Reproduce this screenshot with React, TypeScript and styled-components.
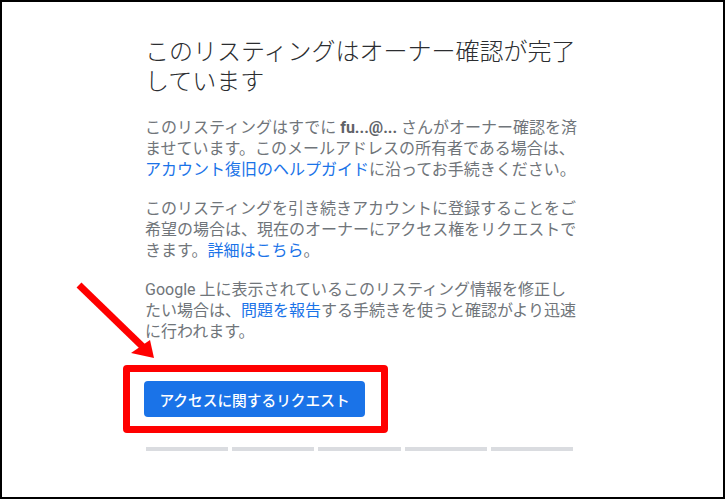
import { FC } from "react";
import styled, { createGlobalStyle } from "styled-components";

const GlobalStyle = createGlobalStyle`
  * { box-sizing: border-box; }
  html, body {
    margin: 0;
    padding: 0;
    background: #ffffff;
  }
  body {
    font-family: Roboto, "Noto Sans CJK JP", "Noto Sans", sans-serif;
  }
`;

const Frame = styled.div`
  position: relative;
  width: 725px;
  height: 499px;
  border: 2px solid #000;
  background: #fff;
  overflow: hidden;
`;

const Column = styled.div`
  width: 434px;
  margin-left: 143px;
  padding-top: 35px;
`;

const Title = styled.h1`
  margin: 0;
  font-size: 24px;
  line-height: 30px;
  font-weight: 300;
  color: #2b2d30;
`;

const Paragraph = styled.p<{ $gap: number }>`
  margin: ${(p) => p.$gap}px 0 0;
  font-size: 16px;
  line-height: 21px;
  color: #70757a;
`;

const Strong = styled.b`
  font-weight: 700;
  color: #5f6368;
`;

const Link = styled.a`
  color: #1a73e8;
  text-decoration: none;
`;

const ActionRow = styled.div`
  margin-top: 39px;
  display: flex;
`;

const ButtonSlot = styled.div`
  position: relative;
  margin-left: -1px;
`;

const Highlight = styled.div`
  position: absolute;
  top: -16px;
  left: -21px;
  right: -23px;
  bottom: -16px;
  border: 7px solid #ff0000;
  border-radius: 4px;
  pointer-events: none;
`;

const PrimaryButton = styled.button`
  width: 221px;
  height: 36px;
  border: none;
  border-radius: 4px;
  background: #1a73e8;
  color: #fff;
  font-family: inherit;
  font-size: 14.7px;
  font-weight: 500;
  cursor: pointer;
`;

const Steps = styled.div`
  margin-top: 30px;
  margin-left: 1px;
  width: 427px;
  display: flex;
  gap: 4px;
`;

const Step = styled.div`
  flex: 1;
  height: 4px;
  background: #dadce0;
`;

const ArrowLayer = styled.svg`
  position: absolute;
  top: -2px;
  left: -2px;
  pointer-events: none;
`;

const Arrow: FC = () => (
  <ArrowLayer width="725" height="499" viewBox="0 0 725 499">
    <polygon
      points="154,358 131,353 150,340"
      fill="#ff0000"
      stroke="#ffffff"
      strokeWidth="3"
      paintOrder="stroke"
    />
    <line x1="79" y1="285" x2="143" y2="347" stroke="#ff0000" strokeWidth="7" />
  </ArrowLayer>
);

const App: FC = () => {
  return (
    <>
      <GlobalStyle />
      <Frame>
        <Column>
          <Title>このリスティングはオーナー確認が完了しています</Title>
          <Paragraph $gap={20}>
            このリスティングはすでに <Strong>fu...@...</Strong> さんがオーナー確認を済ませています。このメールアドレスの所有者である場合は、
            <Link href="#">アカウント復旧のヘルプガイド</Link>に沿ってお手続きください。
          </Paragraph>
          <Paragraph $gap={18}>
            このリスティングを引き続きアカウントに登録することをご希望の場合は、現在のオーナーにアクセス権をリクエストできます。
            <Link href="#">詳細はこちら</Link>。
          </Paragraph>
          <Paragraph $gap={18}>
            Google 上に表示されているこのリスティング情報を修正したい場合は、
            <Link href="#">問題を報告</Link>する手続きを使うと確認がより迅速に行われます。
          </Paragraph>
          <ActionRow>
            <ButtonSlot>
              <PrimaryButton type="button">アクセスに関するリクエスト</PrimaryButton>
              <Highlight />
            </ButtonSlot>
          </ActionRow>
          <Steps>
            {[0, 1, 2, 3, 4].map((i) => (
              <Step key={i} />
            ))}
          </Steps>
        </Column>
        <Arrow />
      </Frame>
    </>
  );
};

export default App;
